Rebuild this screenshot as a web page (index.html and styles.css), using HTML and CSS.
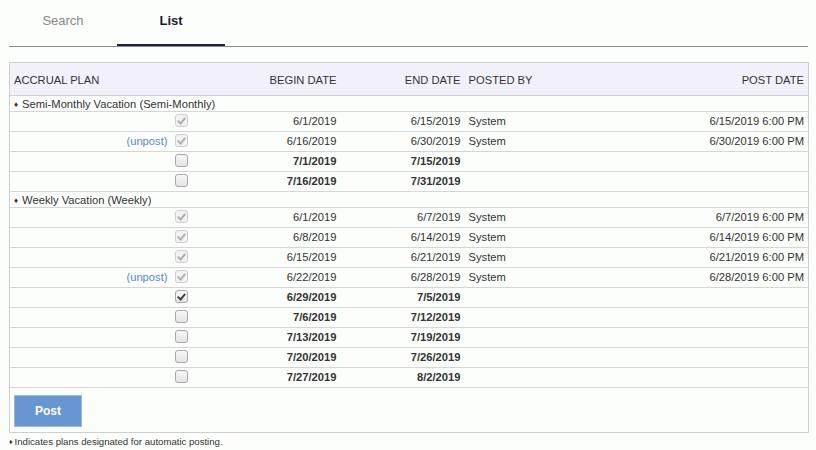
FILE: index.html
```html
<!DOCTYPE html>
<html>
<head>
<meta charset="utf-8">
<link rel="stylesheet" href="styles.css">
</head>
<body>
<div class="page">
  <div class="tabs">
    <div class="tab">Search</div>
    <div class="tab active">List</div>
  </div>
  <table class="grid">
    <colgroup>
      <col class="c-plan"><col class="c-chk"><col class="c-begin"><col class="c-end"><col class="c-by"><col class="c-post">
    </colgroup>
    <thead>
      <tr><th class="l">ACCRUAL PLAN</th><th></th><th class="r">BEGIN DATE</th><th class="r">END DATE</th><th class="l by">POSTED BY</th><th class="r">POST DATE</th></tr>
    </thead>
    <tbody>
      <tr class="group"><td colspan="6"><span class="dia">♦</span>Semi-Monthly Vacation (Semi-Monthly)</td></tr>
      <tr><td></td><td class="chk"><span class="cb dis on"></span></td><td class="r">6/1/2019</td><td class="r">6/15/2019</td><td class="by">System</td><td class="r">6/15/2019 6:00 PM</td></tr>
      <tr><td class="r unpost">(unpost)</td><td class="chk"><span class="cb dis on"></span></td><td class="r">6/16/2019</td><td class="r">6/30/2019</td><td class="by">System</td><td class="r">6/30/2019 6:00 PM</td></tr>
      <tr class="b"><td></td><td class="chk"><span class="cb"></span></td><td class="r">7/1/2019</td><td class="r">7/15/2019</td><td></td><td></td></tr>
      <tr class="b"><td></td><td class="chk"><span class="cb"></span></td><td class="r">7/16/2019</td><td class="r">7/31/2019</td><td></td><td></td></tr>
      <tr class="group"><td colspan="6"><span class="dia">♦</span>Weekly Vacation (Weekly)</td></tr>
      <tr><td></td><td class="chk"><span class="cb dis on"></span></td><td class="r">6/1/2019</td><td class="r">6/7/2019</td><td class="by">System</td><td class="r">6/7/2019 6:00 PM</td></tr>
      <tr><td></td><td class="chk"><span class="cb dis on"></span></td><td class="r">6/8/2019</td><td class="r">6/14/2019</td><td class="by">System</td><td class="r">6/14/2019 6:00 PM</td></tr>
      <tr><td></td><td class="chk"><span class="cb dis on"></span></td><td class="r">6/15/2019</td><td class="r">6/21/2019</td><td class="by">System</td><td class="r">6/21/2019 6:00 PM</td></tr>
      <tr><td class="r unpost">(unpost)</td><td class="chk"><span class="cb dis on"></span></td><td class="r">6/22/2019</td><td class="r">6/28/2019</td><td class="by">System</td><td class="r">6/28/2019 6:00 PM</td></tr>
      <tr class="b"><td></td><td class="chk"><span class="cb on"></span></td><td class="r">6/29/2019</td><td class="r">7/5/2019</td><td></td><td></td></tr>
      <tr class="b"><td></td><td class="chk"><span class="cb"></span></td><td class="r">7/6/2019</td><td class="r">7/12/2019</td><td></td><td></td></tr>
      <tr class="b"><td></td><td class="chk"><span class="cb"></span></td><td class="r">7/13/2019</td><td class="r">7/19/2019</td><td></td><td></td></tr>
      <tr class="b"><td></td><td class="chk"><span class="cb"></span></td><td class="r">7/20/2019</td><td class="r">7/26/2019</td><td></td><td></td></tr>
      <tr class="b"><td></td><td class="chk"><span class="cb"></span></td><td class="r">7/27/2019</td><td class="r">8/2/2019</td><td></td><td></td></tr>
    </tbody>
    <tfoot>
      <tr><td colspan="6" class="foot"><button class="post">Post</button></td></tr>
    </tfoot>
  </table>
  <div class="note"><span class="dia">♦</span>Indicates plans designated for automatic posting.</div>
</div>
</body>
</html>
```
FILE: styles.css
```css
html, body {
  margin: 0;
  padding: 0;
  background: #fcfefb;
}
body {
  font-family: "Liberation Sans", Arial, sans-serif;
  color: #333;
}
.page {
  padding: 0 8px 0 9px;
}
.tabs {
  display: flex;
  height: 46px;
  border-bottom: 1px solid #8c8c8c;
}
.tab {
  width: 108px;
  height: 44px;
  line-height: 42px;
  text-align: center;
  font-size: 13px;
  color: #888;
  border-bottom: 2px solid transparent;
}
.tab.active {
  color: #1b1b2f;
  font-weight: bold;
  border-bottom-color: #1c2140;
}
.grid {
  margin-top: 15px;
  width: 800px;
  border-collapse: collapse;
  border: 1px solid #cfcfcf;
  font-size: 11.2px;
  table-layout: fixed;
}
.c-plan { width: 163px; }
.c-chk { width: 18px; }
.c-begin { width: 150px; }
.c-end { width: 124px; }
.c-by { width: 80px; }
th {
  background: #f2f1fb;
  font-weight: normal;
  height: 31px;
  padding: 1px 4px 0;
  border-bottom: 1px solid #cfcfcf;
  color: #333;
  white-space: nowrap;
}
th.l { text-align: left; }
th.r { text-align: right; }
td {
  height: 18px;
  padding: 0 4px 1px;
  border-bottom: 1px solid #d6d6d6;
  white-space: nowrap;
}
td.r { text-align: right; }
td.by { padding-left: 4px; }
th.by { padding-left: 4px; }
tr.group td {
  height: 15px;
  padding: 0 0 0 4px;
}
tr.b td { font-weight: bold; }
.dia {
  font-size: 8px;
  margin-right: 4px;
  position: relative;
  top: -1px;
}
td.unpost {
  color: #5a87c5;
  padding-right: 5px;
}
td.chk {
  padding: 0;
  text-align: center;
}
.cb {
  display: inline-block;
  box-sizing: border-box;
  width: 13px;
  height: 13px;
  border: 1px solid #a9a9a9;
  border-radius: 3px;
  background: linear-gradient(#f7f7f7, #e4e4e4);
  vertical-align: middle;
  position: relative;
  top: -1px;
}
.cb.on::after {
  content: "";
  position: absolute;
  left: 3px;
  top: 1px;
  width: 3px;
  height: 6px;
  border: solid #444;
  border-width: 0 2px 2px 0;
  transform: rotate(40deg);
}
.cb.dis {
  border-color: #cfcfcf;
  background: #f2f2f2;
}
.cb.dis.on::after {
  border-color: #b0b0b0;
}
td.foot {
  height: 44px;
  padding: 0 4px;
  border-bottom: none;
}
.post {
  display: block;
  width: 68px;
  height: 32px;
  background: #6896d0;
  border: 1px solid #9ab8e0;
  color: #fff;
  font-family: "Liberation Sans", Arial, sans-serif;
  font-weight: bold;
  font-size: 12px;
  padding: 0;
  margin-top: 2px;
}
.note {
  font-size: 9.6px;
  margin-top: 3px;
  color: #333;
}
.note .dia {
  font-size: 7px;
  margin-right: 2px;
}
```
